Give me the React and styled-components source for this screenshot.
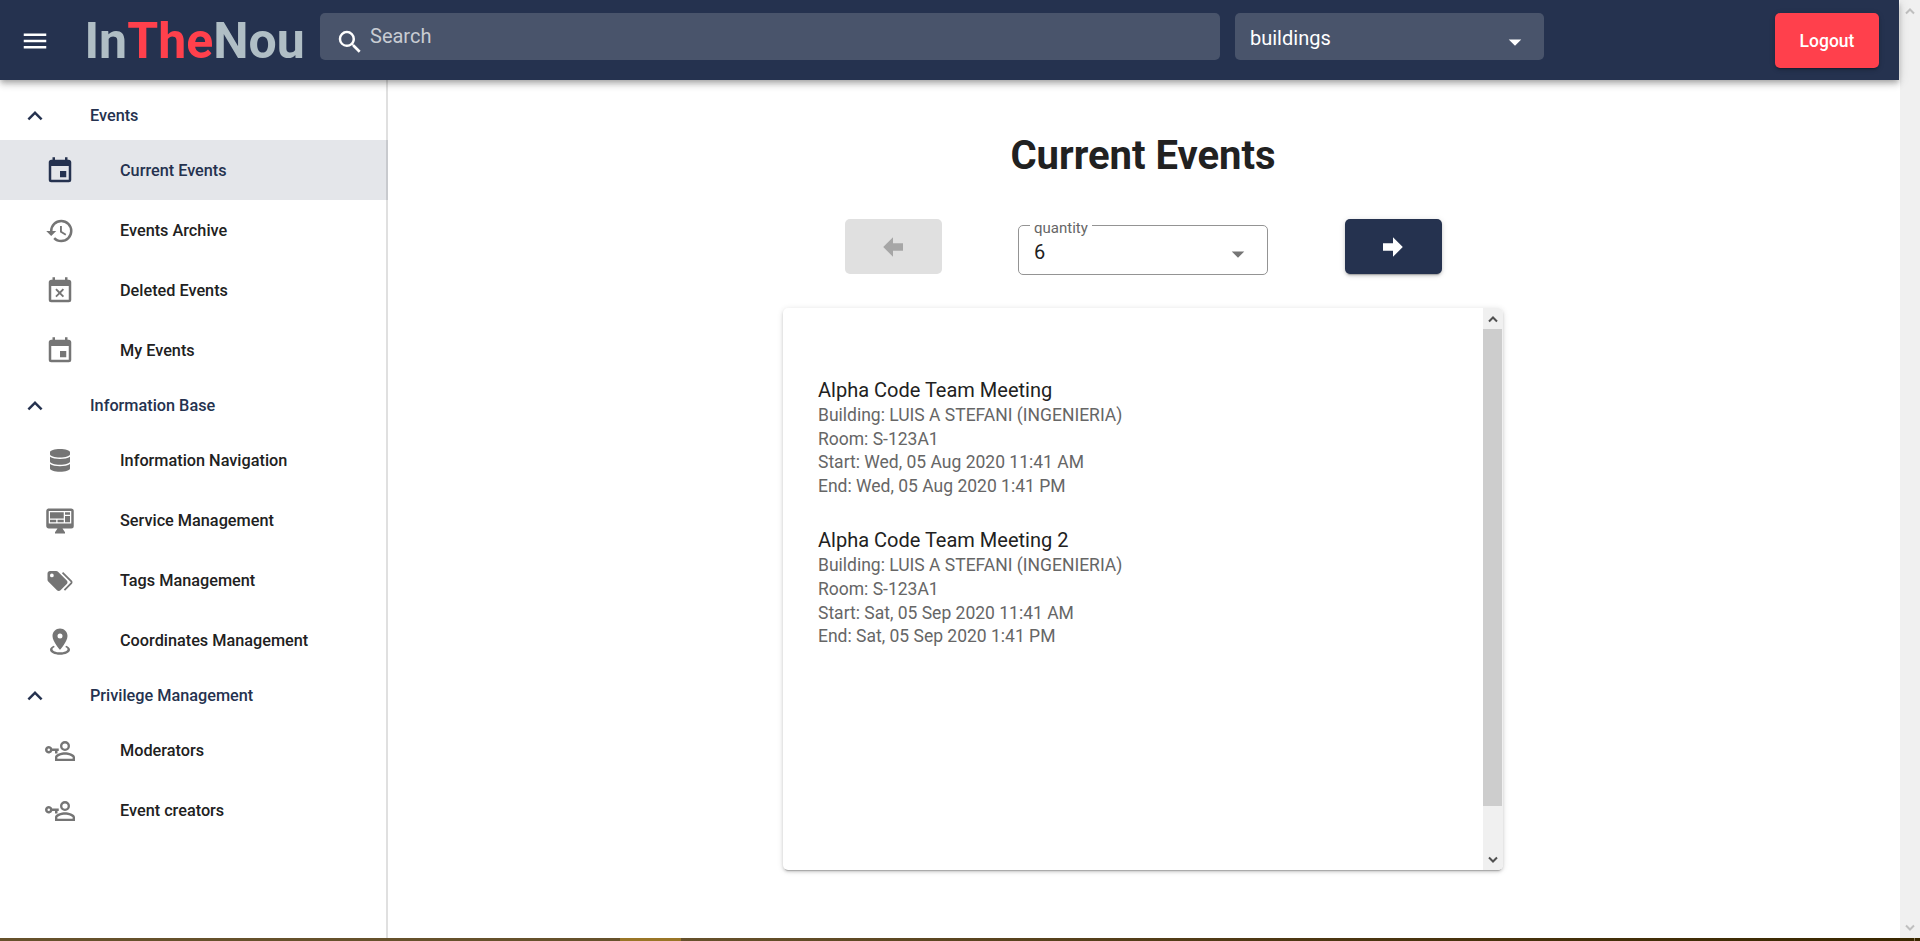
import React from "react";
import styled, { createGlobalStyle } from "styled-components";

const NAVY = "#25324f";

const GlobalStyle = createGlobalStyle`
  * { box-sizing: border-box; }
  html, body { margin: 0; padding: 0; height: 100%; overflow: hidden; }
  body { font-family: Roboto, "Liberation Sans", sans-serif; color: #212121; background: #fff; }
`;

const Screen = styled.div`
  display: flex;
  flex-direction: column;
  width: 1920px;
  height: 941px;
  overflow: hidden;
`;

const Viewport = styled.div`
  flex: 1;
  min-height: 0;
  display: flex;
`;

const Page = styled.div`
  width: 1899px;
  margin-right: 1px;
  display: flex;
  flex-direction: column;
`;

const Toolbar = styled.header`
  position: relative;
  z-index: 2;
  flex: none;
  height: 80px;
  padding: 13px 20px 0 20px;
  display: flex;
  align-items: flex-start;
  background: ${NAVY};
  box-shadow: 0 2.5px 5px -1px rgba(0, 0, 0, 0.2), 0 5px 6px rgba(0, 0, 0, 0.14),
    0 1px 12px rgba(0, 0, 0, 0.12);
`;

const MenuButton = styled.button`
  border: 0;
  padding: 0;
  background: none;
  width: 30px;
  height: 55px;
  color: #fff;
  display: flex;
  align-items: center;
`;

const Logo = styled.h1`
  margin: 0 0 0 34.5px;
  width: 235.5px;
  height: 55px;
  line-height: 57px;
  font-size: 50px;
  font-weight: 700;
  white-space: nowrap;
  color: #b0bec5;
`;

const LogoAccent = styled.span`
  color: #ff404c;
`;

const Field = styled.div`
  width: ${(p) => p.$width}px;
  height: 47px;
  margin-right: 15px;
  border-radius: 5px;
  background: #49546b;
  display: flex;
  align-items: center;
  color: #fff;
  font-size: 20px;
`;

const SearchField = styled(Field)`
  padding-left: 15px;
  svg { margin-top: 10px; }
`;

const Placeholder = styled.span`
  margin: -2px 0 0 5px;
  color: #c8ccd3;
`;

const FilterSelect = styled(Field)`
  padding: 2px 14.5px 0 15px;
  justify-content: space-between;
  svg { margin-top: 8px; }
`;

const ActionButton = styled.button`
  border: 0;
  padding: 0;
  width: ${(p) => p.$width}px;
  height: 55px;
  border-radius: 5px;
  display: flex;
  align-items: center;
  justify-content: center;
  font: 500 17.5px Roboto, "Liberation Sans", sans-serif;
  color: ${(p) => (p.disabled ? "#a6a6a6" : "#fff")};
  background: ${(p) => (p.disabled ? "#e0e0e0" : p.$danger ? "#ff404c" : NAVY)};
  box-shadow: ${(p) =>
    p.disabled
      ? "none"
      : "0 3px 1px -2px rgba(0,0,0,.2), 0 2px 3px rgba(0,0,0,.14), 0 1px 6px rgba(0,0,0,.12)"};
`;

const LogoutButton = styled(ActionButton)`
  margin-left: auto;
`;

const Body = styled.div`
  flex: 1;
  min-height: 0;
  display: flex;
`;

const Sidebar = styled.nav`
  width: 388px;
  padding-top: 10px;
  background: linear-gradient(#e0e0e0, #e0e0e0) right / 2px 100% no-repeat;
`;

const GroupHeader = styled.div`
  height: 50px;
  padding-left: 20px;
  display: flex;
  align-items: center;
  gap: 40px;
  color: ${NAVY};
  font-size: 16.25px;
  font-weight: 500;
  svg { margin-top: 1px; }
`;

const NavItem = styled.a`
  height: 60px;
  padding-left: 45px;
  display: flex;
  align-items: center;
  gap: 45px;
  font-size: 16.25px;
  font-weight: 500;
  color: ${(p) => (p.$active ? NAVY : "#212121")};
  background: ${(p) => (p.$active ? "rgba(37, 50, 79, 0.12)" : "transparent")};
  svg {
    margin-top: 1px;
    color: ${(p) => (p.$active ? NAVY : "#757575")};
  }
`;

const Main = styled.main`
  flex: 1;
  padding-right: 1px;
  display: flex;
  flex-direction: column;
  align-items: center;
`;

const Heading = styled.h2`
  margin: 46px 0 33px;
  height: 60px;
  line-height: 60px;
  font-size: 40px;
  font-weight: 700;
`;

const Pager = styled.div`
  width: 597px;
  height: 56px;
  display: flex;
  justify-content: space-between;
`;

const QuantityBox = styled.fieldset`
  width: 250px;
  height: 61.5px;
  margin: -5.5px 0 0;
  padding: 0 14px 0 15px;
  border: 1px solid #949494;
  border-radius: 5px;
`;

const QuantityLabel = styled.legend`
  margin-left: -4px;
  padding: 5px 4px 0;
  font-size: 15px;
  line-height: 18px;
  color: #666;
`;

const QuantityValue = styled.div`
  height: 30px;
  display: flex;
  justify-content: space-between;
  align-items: center;
  font-size: 20px;
  line-height: 30px;
  svg { margin-top: 5px; color: #757575; }
`;

const Card = styled.section`
  width: 720px;
  height: 562px;
  margin-top: 33px;
  border-radius: 5px;
  overflow: hidden;
  display: flex;
  background: #fff;
  box-shadow: 0 3px 1px -2px rgba(0, 0, 0, 0.2), 0 2px 3px rgba(0, 0, 0, 0.14),
    0 1px 6px rgba(0, 0, 0, 0.12);
`;

const EventList = styled.div`
  flex: 1;
  padding: 70px 35px 0;
  display: flex;
  flex-direction: column;
  gap: 30px;
`;

const EventEntry = styled.article`
  font-size: 17.5px;
  line-height: 23.6px;
  color: #666;
`;

const EventTitle = styled.h3`
  margin: 0 0 1px;
  font-size: 20px;
  font-weight: 400;
  line-height: 25px;
  color: #212121;
`;

const Track = styled.div`
  width: 20px;
  background: #f0f0f0;
  display: flex;
  flex-direction: column;
  justify-content: space-between;
  align-items: center;
  color: ${(p) => (p.$idle ? "#bfbfbf" : "#505050")};
`;

const ArrowCell = styled.div`
  height: 21px;
  display: flex;
  align-items: center;
`;

const Thumb = styled.div`
  width: 19px;
  height: 477px;
  margin: 0 1px auto 0;
  background: #cdcdcd;
`;

const BottomEdge = styled.div`
  height: 3px;
  background: linear-gradient(90deg, #66512b 0 620px, #9a7626 620px 681px, #66512b 681px,
    #4d3712 1300px, #3a2800 1914px, #8a7c5c 1914px 1915px, #3a2800 1915px);
`;

const paths = {
  menu: "M3,6H21V8H3V6M3,11H21V13H3V11M3,16H21V18H3V16Z",
  search:
    "M9.5,3A6.5,6.5 0 0,1 16,9.5C16,11.11 15.41,12.59 14.44,13.73L14.71,14H15.5L20.5,19L19,20.5L14,15.5V14.71L13.73,14.44C12.59,15.41 11.11,16 9.5,16A6.5,6.5 0 0,1 3,9.5A6.5,6.5 0 0,1 9.5,3M9.5,5C7,5 5,7 5,9.5C5,12 7,14 9.5,14C12,14 14,12 14,9.5C14,7 12,5 9.5,5Z",
  caret: "M7,10L12,15L17,10H7Z",
  chevron: "M7.41,15.41L12,10.83L16.59,15.41L18,14L12,8L6,14L7.41,15.41Z",
  event:
    "M19,19H5V8H19M16,1V3H8V1H6V3H5C3.89,3 3,3.89 3,5V19A2,2 0 0,0 5,21H19A2,2 0 0,0 21,19V5C21,3.89 20.1,3 19,3H18V1M17,12H12V17H17V12Z",
  history:
    "M13.5,8H12V13L16.28,15.54L17,14.33L13.5,12.25V8M13,3A9,9 0 0,0 4,12H1L4.96,16.03L9,12H6A7,7 0 0,1 13,5A7,7 0 0,1 20,12A7,7 0 0,1 13,19C11.07,19 9.32,18.21 8.06,16.94L6.64,18.36C8.27,20 10.5,21 13,21A9,9 0 0,0 22,12A9,9 0 0,0 13,3",
  remove:
    "M19,19H5V8H19M19,3H18V1H16V3H8V1H6V3H5C3.89,3 3,3.89 3,5V19A2,2 0 0,0 5,21H19A2,2 0 0,0 21,19V5A2,2 0 0,0 19,3M9.31,17L11.75,14.56L14.19,17L15.25,15.94L12.81,13.5L15.25,11.06L14.19,10L11.75,12.44L9.31,10L8.25,11.06L10.69,13.5L8.25,15.94L9.31,17Z",
  dashboard:
    "M21,14V4H3V14H21M21,2A2,2 0 0,1 23,4V16A2,2 0 0,1 21,18H14L16,21V22H8V21L10,18H3C1.89,18 1,17.1 1,16V4C1,2.89 1.89,2 3,2H21M4,5H15V10H4V5M16,5H20V7H16V5M20,8V13H16V8H20M4,11H9V13H4V11M10,11H15V13H10V11Z",
  tags:
    "M5.5,9A1.5,1.5 0 0,0 7,7.5A1.5,1.5 0 0,0 5.5,6A1.5,1.5 0 0,0 4,7.5A1.5,1.5 0 0,0 5.5,9M17.41,11.58C17.77,11.94 18,12.44 18,13C18,13.55 17.78,14.05 17.41,14.41L12.41,19.41C12.05,19.77 11.55,20 11,20C10.45,20 9.95,19.78 9.58,19.41L2.59,12.42C2.22,12.05 2,11.55 2,11V6C2,4.89 2.89,4 4,4H9C9.55,4 10.05,4.22 10.41,4.58L17.41,11.58M13.54,5.71L14.54,4.71L21.41,11.58C21.78,11.94 22,12.45 22,13C22,13.55 21.78,14.05 21.42,14.41L16.04,19.79L15.04,18.79L20.75,13L13.54,5.71Z",
  marker:
    "M12,2C15.31,2 18,4.66 18,7.95C18,12.41 12,19 12,19C12,19 6,12.41 6,7.95C6,4.66 8.69,2 12,2M12,6A2,2 0 0,0 10,8A2,2 0 0,0 12,10A2,2 0 0,0 14,8A2,2 0 0,0 12,6M20,19C20,21.21 16.42,23 12,23C7.58,23 4,21.21 4,19C4,17.71 5.22,16.56 7.11,15.83L7.75,16.74C6.67,17.19 6,17.81 6,18.5C6,19.88 8.69,21 12,21C15.31,21 18,19.88 18,18.5C18,17.81 17.33,17.19 16.25,16.74L16.89,15.83C18.78,16.56 20,17.71 20,19Z",
  userKey:
    "M11,10V12H10V14H8V12H5.83A3,3 0 1,1 5.83,10H11M3,10A1,1 0 1,0 4,11A1,1 0 0,0 3,10M16,4A4,4 0 1,1 12,8A4,4 0 0,1 16,4M16,5.9A2.1,2.1 0 1,0 18.1,8A2.1,2.1 0 0,0 16,5.9M16,13C18.67,13 24,14.33 24,17V20H8V17C8,14.33 13.33,13 16,13M16,14.9C13.03,14.9 9.9,16.36 9.9,17V18.1H22.1V17C22.1,16.36 18.97,14.9 16,14.9",
  prev: "M20,9V15H12V19.84L4.16,12L12,4.16V9H20Z",
  next: "M4,15V9H12V4.16L19.84,12L12,19.84V15H4Z",
};

function Icon({ name }) {
  return (
    <svg width="30" height="30" viewBox="0 0 24 24" fill="currentColor" fillRule="evenodd">
      <path d={paths[name]} />
    </svg>
  );
}

function DatabaseIcon() {
  return (
    <svg width="30" height="22.9" viewBox="-112 0 672 512" fill="currentColor">
      <path d="M448 73.143v45.714C448 159.143 347.667 192 224 192S0 159.143 0 118.857V73.143C0 32.857 100.333 0 224 0s224 32.857 224 73.143zM448 176v102.857C448 319.143 347.667 352 224 352S0 319.143 0 278.857V176c48.125 33.143 136.208 48.572 224 48.572S399.874 209.143 448 176zm0 160v102.857C448 479.143 347.667 512 224 512S0 479.143 0 438.857V336c48.125 33.143 136.208 48.572 224 48.572S399.874 369.143 448 336z" />
    </svg>
  );
}

function ScrollArrow({ down }) {
  return (
    <ArrowCell>
      <svg width="10" height="8" viewBox="0 0 10 8" fill="none" stroke="currentColor" strokeWidth="2">
        <path d={down ? "M1,1.5L5,5.5L9,1.5" : "M1,6.5L5,2.5L9,6.5"} />
      </svg>
    </ArrowCell>
  );
}

const groups = [
  {
    title: "Events",
    items: [
      { label: "Current Events", icon: "event", active: true },
      { label: "Events Archive", icon: "history" },
      { label: "Deleted Events", icon: "remove" },
      { label: "My Events", icon: "event" },
    ],
  },
  {
    title: "Information Base",
    items: [
      { label: "Information Navigation", icon: "database" },
      { label: "Service Management", icon: "dashboard" },
      { label: "Tags Management", icon: "tags" },
      { label: "Coordinates Management", icon: "marker" },
    ],
  },
  {
    title: "Privilege Management",
    items: [
      { label: "Moderators", icon: "userKey" },
      { label: "Event creators", icon: "userKey" },
    ],
  },
];

const events = [
  {
    title: "Alpha Code Team Meeting",
    lines: [
      "Building: LUIS A STEFANI (INGENIERIA)",
      "Room: S-123A1",
      "Start: Wed, 05 Aug 2020 11:41 AM",
      "End: Wed, 05 Aug 2020 1:41 PM",
    ],
  },
  {
    title: "Alpha Code Team Meeting 2",
    lines: [
      "Building: LUIS A STEFANI (INGENIERIA)",
      "Room: S-123A1",
      "Start: Sat, 05 Sep 2020 11:41 AM",
      "End: Sat, 05 Sep 2020 1:41 PM",
    ],
  },
];

export default function App() {
  return (
    <>
      <GlobalStyle />
      <Screen>
        <Viewport>
          <Page>
            <Toolbar>
              <MenuButton aria-label="Menu">
                <Icon name="menu" />
              </MenuButton>
              <Logo>
                In<LogoAccent>The</LogoAccent>Nou
              </Logo>
              <SearchField $width={900}>
                <Icon name="search" />
                <Placeholder>Search</Placeholder>
              </SearchField>
              <FilterSelect $width={309}>
                <span>buildings</span>
                <Icon name="caret" />
              </FilterSelect>
              <LogoutButton $width={104} $danger>
                Logout
              </LogoutButton>
            </Toolbar>
            <Body>
              <Sidebar>
                {groups.map((group) => (
                  <React.Fragment key={group.title}>
                    <GroupHeader>
                      <Icon name="chevron" />
                      {group.title}
                    </GroupHeader>
                    {group.items.map((item) => (
                      <NavItem key={item.label} $active={item.active}>
                        {item.icon === "database" ? <DatabaseIcon /> : <Icon name={item.icon} />}
                        {item.label}
                      </NavItem>
                    ))}
                  </React.Fragment>
                ))}
              </Sidebar>
              <Main>
                <Heading>Current Events</Heading>
                <Pager>
                  <ActionButton $width={97} disabled aria-label="Previous">
                    <Icon name="prev" />
                  </ActionButton>
                  <QuantityBox>
                    <QuantityLabel>quantity</QuantityLabel>
                    <QuantityValue>
                      6
                      <Icon name="caret" />
                    </QuantityValue>
                  </QuantityBox>
                  <ActionButton $width={97} aria-label="Next">
                    <Icon name="next" />
                  </ActionButton>
                </Pager>
                <Card>
                  <EventList>
                    {events.map((event) => (
                      <EventEntry key={event.title}>
                        <EventTitle>{event.title}</EventTitle>
                        {event.lines.map((line) => (
                          <div key={line}>{line}</div>
                        ))}
                      </EventEntry>
                    ))}
                  </EventList>
                  <Track>
                    <ScrollArrow />
                    <Thumb />
                    <ScrollArrow down />
                  </Track>
                </Card>
              </Main>
            </Body>
          </Page>
          <Track $idle>
            <ScrollArrow />
            <ScrollArrow down />
          </Track>
        </Viewport>
        <BottomEdge />
      </Screen>
    </>
  );
}
